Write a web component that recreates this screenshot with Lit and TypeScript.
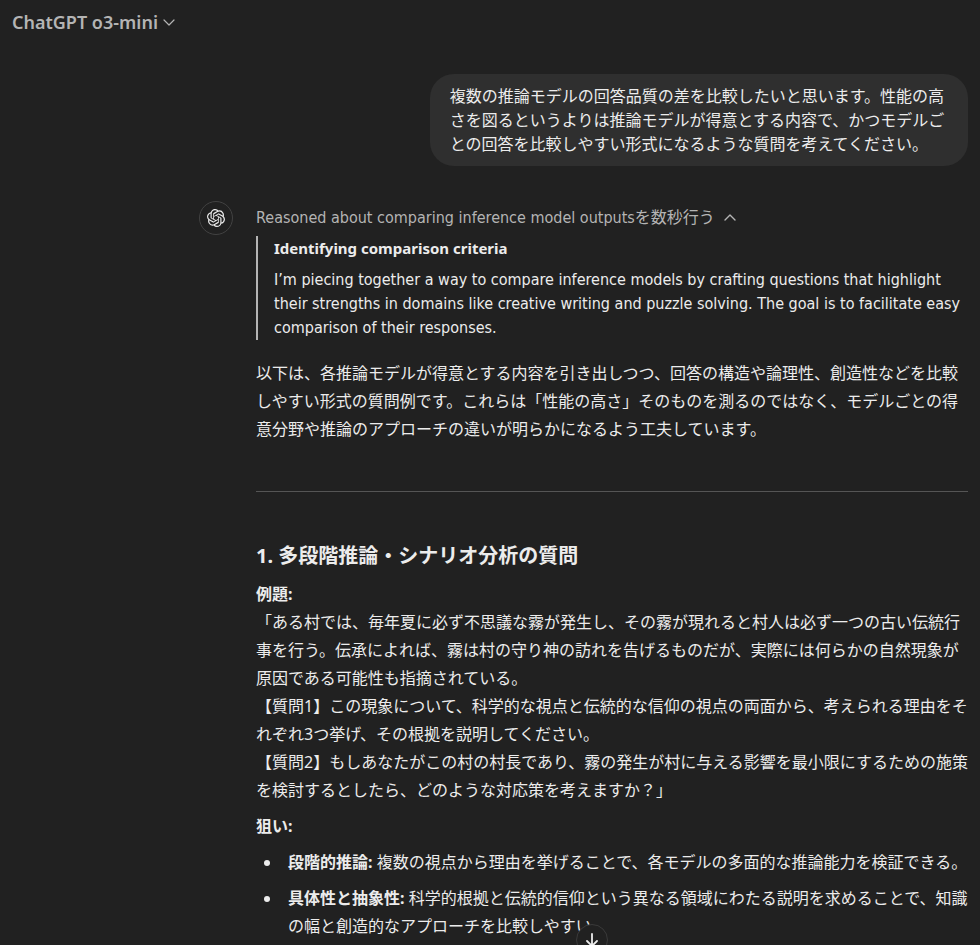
import { LitElement, html, css, svg } from "lit";
import { customElement } from "lit/decorators.js";

const logo = svg`<path d="M22.2819 9.8211a5.9847 5.9847 0 0 0-.5157-4.9108 6.0462 6.0462 0 0 0-6.5098-2.9A6.0651 6.0651 0 0 0 4.9807 4.1818a5.9847 5.9847 0 0 0-3.9977 2.9 6.0462 6.0462 0 0 0 .7427 7.0966 5.98 5.98 0 0 0 .511 4.9107 6.051 6.051 0 0 0 6.5146 2.9001A5.9847 5.9847 0 0 0 13.2599 24a6.0557 6.0557 0 0 0 5.7718-4.2058 5.9894 5.9894 0 0 0 3.9977-2.9001 6.0557 6.0557 0 0 0-.7475-7.0729zm-9.022 12.6081a4.4755 4.4755 0 0 1-2.8764-1.0408l.1419-.0804 4.7783-2.7582a.7948.7948 0 0 0 .3927-.6813v-6.7369l2.02 1.1686a.071.071 0 0 1 .038.052v5.5826a4.504 4.504 0 0 1-4.4945 4.4944zm-9.6607-4.1254a4.4708 4.4708 0 0 1-.5346-3.0137l.142.0852 4.783 2.7582a.7712.7712 0 0 0 .7806 0l5.8428-3.3685v2.3324a.0804.0804 0 0 1-.0332.0615L9.74 19.9502a4.4992 4.4992 0 0 1-6.1408-1.6464zM2.3408 7.8956a4.485 4.485 0 0 1 2.3655-1.9728V11.6a.7664.7664 0 0 0 .3879.6765l5.8144 3.3543-2.0201 1.1685a.0757.0757 0 0 1-.071 0l-4.8303-2.7865A4.504 4.504 0 0 1 2.3408 7.872zm16.5963 3.8558L13.1038 8.364 15.1192 7.2a.0757.0757 0 0 1 .071 0l4.8303 2.7913a4.4944 4.4944 0 0 1-.6765 8.1042v-5.6772a.79.79 0 0 0-.407-.667zm2.0107-3.0231l-.142-.0852-4.7735-2.7818a.7759.7759 0 0 0-.7854 0L9.409 9.2297V6.8974a.0662.0662 0 0 1 .0284-.0615l4.8303-2.7866a4.4992 4.4992 0 0 1 6.6802 4.66zM8.3065 12.863l-2.02-1.1638a.0804.0804 0 0 1-.038-.0567V6.0742a4.4992 4.4992 0 0 1 7.3757-3.4537l-.142.0805L8.704 5.459a.7948.7948 0 0 0-.3927.6813zm1.0976-2.3654l2.602-1.4998 2.6069 1.4998v2.9994l-2.5974 1.4997-2.6067-1.4997Z"/>`;

@customElement("app-root")
export class AppRoot extends LitElement {
  static styles = css`
    :host {
      display: block;
      position: relative;
      height: 100vh;
      overflow: hidden;
      background: #212121;
      color: #ececec;
      font: 16px/28px "Noto Sans", "Noto Sans CJK JP", sans-serif;
    }
    * { box-sizing: border-box; }
    h3, h4, p, ul { margin: 0; }
    button { font: inherit; color: inherit; background: none; border: 0; padding: 0; cursor: pointer; }
    svg { display: block; flex: none; }
    .line { fill: none; stroke: currentColor; stroke-linecap: round; stroke-linejoin: round; }
    .top { padding: 8px 12px; color: #b4b4b4; }
    .model { display: flex; align-items: center; gap: 4px; font-size: 18px; font-weight: 600; }
    .thread { max-width: 793px; margin-left: auto; padding: 30px 12px 0; }
    .bubble {
      width: 70%;
      margin-left: auto;
      padding: 10px 20px;
      border-radius: 24px;
      background: #2f2f2f;
      line-height: 24px;
    }
    .reply { display: flex; gap: 23px; margin-top: 35px; }
    .avatar {
      display: grid;
      place-items: center;
      flex: none;
      width: 34px;
      height: 34px;
      border: 1px solid #424242;
      border-radius: 50%;
      fill: currentColor;
    }
    .body { flex: 1; min-width: 0; padding-top: 5px; }
    .reason, .thought { font-family: "DejaVu Sans Condensed", "Noto Sans CJK JP", sans-serif; }
    .reason { display: flex; align-items: center; gap: 8px; line-height: 24px; color: #b4b4b4; }
    .thought {
      margin-top: 6px;
      padding-left: 16px;
      border-left: 2px solid #b4b4b4;
      line-height: 24px;
    }
    h4 { font-family: "Noto Sans", sans-serif; font-size: 15px; font-weight: 700; margin-bottom: 8px; }
    .intro { margin-top: 19px; }
    hr { margin: 48px 0; border: 0; border-top: 1px solid #555; }
    h3 { font-size: 20px; font-weight: 700; line-height: 32px; margin-bottom: 8px; }
    strong { font-weight: 700; }
    .example { margin-right: -2px; }
    p + p { margin-top: 8px; }
    ul { margin-top: 8px; padding-left: 32px; list-style: none; }
    li { position: relative; }
    li + li { margin-top: 8px; }
    li::before {
      content: "";
      position: absolute;
      left: -24px;
      top: 12px;
      width: 6px;
      height: 6px;
      border-radius: 50%;
      background: currentColor;
    }
    .down {
      position: absolute;
      right: 372px;
      bottom: -11px;
      display: grid;
      place-items: center;
      width: 32px;
      height: 32px;
      border: 1px solid #3a3a3a;
      border-radius: 50%;
      background: #212121;
    }
  `;

  render() {
    return html`
      <header class="top">
        <button class="model">ChatGPT o3-mini
          <svg class="line" width="14" height="14" viewBox="0 0 14 14" stroke-width="1.2"><path d="M2 5 7 10 12 5"/></svg>
        </button>
      </header>
      <main class="thread">
        <div class="bubble">複数の推論モデルの回答品質の差を比較したいと思います。性能の高さを図るというよりは推論モデルが得意とする内容で、かつモデルごとの回答を比較しやすい形式になるような質問を考えてください。</div>
        <article class="reply">
          <div class="avatar"><svg width="18" height="18" viewBox="0 0 24 24">${logo}</svg></div>
          <div class="body">
            <button class="reason">Reasoned about comparing inference model outputsを数秒行う
              <svg class="line" width="14" height="14" viewBox="0 0 14 14" stroke-width="1.4"><path d="M2 9 7 4 12 9"/></svg>
            </button>
            <section class="thought">
              <h4>Identifying comparison criteria</h4>
              <p>I’m piecing together a way to compare inference models by crafting questions that highlight their strengths in domains like creative writing and puzzle solving. The goal is to facilitate easy comparison of their responses.</p>
            </section>
            <p class="intro">以下は、各推論モデルが得意とする内容を引き出しつつ、回答の構造や論理性、創造性などを比較しやすい形式の質問例です。これらは「性能の高さ」そのものを測るのではなく、モデルごとの得意分野や推論のアプローチの違いが明らかになるよう工夫しています。</p>
            <hr>
            <h3>1. 多段階推論・シナリオ分析の質問</h3>
            <p class="example"><strong>例題:</strong><br>「ある村では、毎年夏に必ず不思議な霧が発生し、その霧が現れると村人は必ず一つの古い伝統行事を行う。伝承によれば、霧は村の守り神の訪れを告げるものだが、実際には何らかの自然現象が原因である可能性も指摘されている。<br>【質問1】この現象について、科学的な視点と伝統的な信仰の視点の両面から、考えられる理由をそれぞれ3つ挙げ、その根拠を説明してください。<br>【質問2】もしあなたがこの村の村長であり、霧の発生が村に与える影響を最小限にするための施策を検討するとしたら、どのような対応策を考えますか？」</p>
            <p><strong>狙い:</strong></p>
            <ul>
              <li><strong>段階的推論:</strong> 複数の視点から理由を挙げることで、各モデルの多面的な推論能力を検証できる。</li>
              <li><strong>具体性と抽象性:</strong> 科学的根拠と伝統的信仰という異なる領域にわたる説明を求めることで、知識の幅と創造的なアプローチを比較しやすい。</li>
            </ul>
          </div>
        </article>
      </main>
      <button class="down" aria-label="一番下へ移動">
        <svg class="line" width="16" height="16" viewBox="0 0 16 16" stroke-width="1.8"><path d="M8 2V14M3 9l5 5 5-5"/></svg>
      </button>
    `;
  }
}
